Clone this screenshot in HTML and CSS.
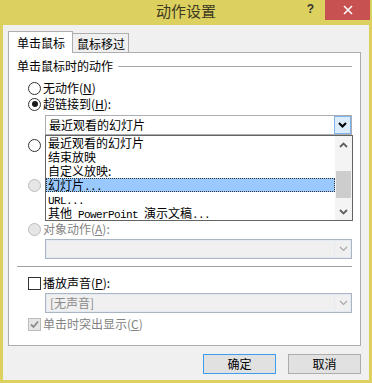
FILE: index.html
```html
<!DOCTYPE html>
<html lang="zh-CN">
<head>
<meta charset="utf-8">
<link rel="stylesheet" href="styles.css">
</head>
<body>
<div class="window">
  <div class="titlebar">
    <div class="title">动作设置</div>
    <div class="controls">
      <span class="help">?</span>
      <span class="close"><svg width="10" height="10" viewBox="0 0 10 10"><path d="M1 1L9 9M9 1L1 9" stroke="#fff" stroke-width="1.6"/></svg></span>
    </div>
  </div>
  <div class="client">
    <div class="tabs">
      <div class="tab tab-active">单击鼠标</div>
      <div class="tab tab-idle">鼠标移过</div>
    </div>
    <div class="panel">
      <div class="group-head"><span>单击鼠标时的动作</span><span class="rule"></span></div>
      <div class="options">
        <div class="row sp-7"><span class="radio"></span><span>无动作(<u>N</u>)</span></div>
        <div class="row"><span class="radio"><span class="dot"></span></span><span>超链接到(<u>H</u>):</span></div>
        <div class="combo sp-3">
          <span class="combo-text">最近观看的幻灯片</span>
          <span class="combo-btn"><svg width="9" height="6" viewBox="0 0 9 6"><path d="M1 1L4.5 4.5L8 1" fill="none" stroke="#000" stroke-width="2"/></svg></span>
          <div class="list">
            <div class="list-items">
              <div class="item">最近观看的幻灯片</div>
              <div class="item">结束放映</div>
              <div class="item">自定义放映:</div>
              <div class="item item-selected">幻灯片<span class="lat">...</span></div>
              <div class="item"><span class="lat">URL...</span></div>
              <div class="item">其他<span class="lat"> PowerPoint </span>演示文稿<span class="lat">...</span></div>
            </div>
            <div class="scrollbar">
              <div class="sb-btn"><svg width="9" height="6" viewBox="0 0 9 6"><path d="M1 5L4.5 1.5L8 5" fill="none" stroke="#606060" stroke-width="1.8"/></svg></div>
              <div class="sb-track"><div class="sb-thumb"></div></div>
              <div class="sb-btn"><svg width="9" height="6" viewBox="0 0 9 6"><path d="M1 1L4.5 4.5L8 1" fill="none" stroke="#606060" stroke-width="1.8"/></svg></div>
            </div>
          </div>
        </div>
        <div class="row sp-2"><span class="radio"></span><span class="peek"></span></div>
        <div class="combo sp-2"></div>
        <div class="row sp-2 disabled"><span class="radio"></span><span class="peek"></span></div>
        <div class="combo sp-2"></div>
        <div class="row sp-6 disabled"><span class="radio"></span><span>对象动作(<u>A</u>):</span></div>
        <div class="combo combo-off sp-2">
          <span class="combo-text"></span>
          <span class="combo-arrow"><svg width="9" height="6" viewBox="0 0 9 6"><path d="M1 1L4.5 4.5L8 1" fill="none" stroke="#a8a8a8" stroke-width="1.2"/></svg></span>
        </div>
      </div>
      <div class="separator"></div>
      <div class="options">
        <div class="row sp-8"><span class="check"></span><span>播放声音(<u>P</u>):</span></div>
        <div class="combo combo-off sp-2">
          <span class="combo-text muted">[无声音]</span>
          <span class="combo-arrow"><svg width="9" height="6" viewBox="0 0 9 6"><path d="M1 1L4.5 4.5L8 1" fill="none" stroke="#a8a8a8" stroke-width="1.2"/></svg></span>
        </div>
        <div class="row sp-3 disabled"><span class="check check-off"><svg width="11" height="11" viewBox="0 0 11 11"><path d="M2 5.5L4.5 8L9 2.5" fill="none" stroke="#8a8a8a" stroke-width="1.8"/></svg></span><span>单击时突出显示(<u>C</u>)</span></div>
      </div>
    </div>
    <div class="actions">
      <div class="btn btn-default">确定</div>
      <div class="btn">取消</div>
    </div>
  </div>
</div>
</body>
</html>
```
FILE: styles.css
```css
* { box-sizing: border-box; }
body {
  margin: 0;
  font-family: "Noto Sans CJK SC", sans-serif;
  font-size: 12px;
  color: #000;
}
u { text-decoration: underline; text-underline-offset: 1px; }
.window {
  width: 372px;
  height: 383px;
  background: #dcd05f;
  display: flex;
  flex-direction: column;
}
.titlebar {
  height: 25px;
  flex: none;
  display: grid;
  grid-template-columns: 1fr auto 1fr;
}
.title {
  grid-column: 2;
  font-size: 15px;
  line-height: 22px;
  color: #3d3a22;
}
.controls {
  grid-column: 3;
  justify-self: end;
  display: flex;
  align-items: flex-start;
  margin-right: 2px;
}
.help {
  font: bold 12px/16px "Liberation Sans", sans-serif;
  color: #333;
  margin-right: 11px;
  padding-top: 1px;
}
.close {
  width: 45px;
  height: 20px;
  background: #c75050;
  display: flex;
  align-items: center;
  justify-content: center;
}
.client {
  flex: 1;
  margin: 0 3px 3px;
  background: #f0f0f0;
  padding: 6px 8px 0 5px;
  display: flex;
  flex-direction: column;
}
.tabs {
  display: flex;
  align-items: flex-end;
  height: 21px;
}
.tab {
  border: 1px solid #adadad;
  border-bottom: none;
  white-space: nowrap;
}
.tab-active {
  height: 22px;
  margin-bottom: -1px;
  background: #fff;
  padding: 0 7px 0 8px;
  line-height: 21px;
  position: relative;
  z-index: 1;
}
.tab-idle {
  height: 19px;
  border-left: none;
  background: #f0f0f0;
  padding: 1px 3px 0 4px;
  line-height: 18px;
}
.panel {
  height: 294px;
  border: 1px solid #adadad;
  background: #fff;
  padding: 6px 8px 0;
}
.group-head {
  display: flex;
  align-items: center;
  height: 14px;
  line-height: 14px;
}
.rule {
  flex: 1;
  height: 1px;
  background: #a8a8a8;
  margin-left: 5px;
}
.options { padding-left: 11px; }
.row {
  display: flex;
  align-items: center;
  gap: 2px;
  height: 16px;
  line-height: 16px;
  white-space: nowrap;
}
.peek { width: 2px; height: 12px; }
.sp-2 { margin-top: 2px; }
.sp-3 { margin-top: 3px; }
.sp-6 { margin-top: 6px; }
.sp-7 { margin-top: 7px; }
.sp-8 { margin-top: 8px; }
.radio {
  width: 13px;
  height: 13px;
  flex: none;
  border-radius: 50%;
  border: 1px solid #333;
  background: #fff;
  display: flex;
  align-items: center;
  justify-content: center;
}
.dot {
  width: 6px;
  height: 6px;
  border-radius: 50%;
  background: #1a1a1a;
}
.disabled { color: #838383; }
.disabled .radio { border-color: #bcbcbc; background: #e6e6e6; }
.check {
  width: 13px;
  height: 13px;
  flex: none;
  border: 1px solid #333;
  background: #fff;
  display: flex;
  align-items: center;
  justify-content: center;
}
.check-off { border-color: #bcbcbc; background: #e6e6e6; }
.combo {
  margin-left: 17px;
  height: 20px;
  border: 1px solid #abadb3;
  background: #fff;
  display: flex;
  position: relative;
}
.combo-text {
  flex: 1;
  padding-left: 3px;
  line-height: 18px;
  white-space: nowrap;
}
.combo-btn {
  width: 17px;
  height: 18px;
  background: #dcecfc;
  border: 1px solid #7eb4ea;
  display: flex;
  align-items: center;
  justify-content: center;
}
.combo-off {
  background: #f0f0f0;
  border-color: #aab5c3;
  box-shadow: inset 0 0 0 1px #e4eaf1;
}
.combo-off .combo-text { padding-left: 4px; }
.muted { color: #8a8a8a; }
.combo-arrow {
  width: 17px;
  height: 18px;
  display: flex;
  align-items: center;
  justify-content: center;
  border-left: 1px solid #e6ebf1;
}
.list {
  position: absolute;
  top: calc(100% + 1px);
  left: -1px;
  right: -2px;
  height: 86px;
  border: 1px solid #646464;
  background: #fff;
  display: flex;
  z-index: 2;
}
.list-items { flex: 1; }
.item {
  height: 14px;
  line-height: 14px;
  padding-left: 2px;
  white-space: nowrap;
}
.item-selected {
  background: #99c9ff;
  outline: 1px dotted #333;
  outline-offset: -1px;
}
.lat {
  font-family: "Liberation Mono", monospace;
  font-size: 11px;
  letter-spacing: -0.6px;
  white-space: pre;
}
.scrollbar {
  width: 17px;
  background: #f4f4f4;
  display: flex;
  flex-direction: column;
}
.sb-btn {
  height: 17px;
  display: flex;
  align-items: center;
  justify-content: center;
}
.sb-track { flex: 1; padding-top: 18px; }
.sb-thumb {
  height: 27px;
  margin: 0 1px;
  background: #cdcdcd;
}
.separator {
  height: 1px;
  background: #a0a0a0;
  margin-top: 7px;
}
.actions {
  display: flex;
  justify-content: flex-end;
  gap: 12px;
  margin-top: 8px;
}
.btn {
  width: 73px;
  height: 20px;
  border: 1px solid #adadad;
  background: #e1e1e1;
  text-align: center;
  line-height: 18px;
}
.btn-default { border-color: #3c9cf0; }
```
